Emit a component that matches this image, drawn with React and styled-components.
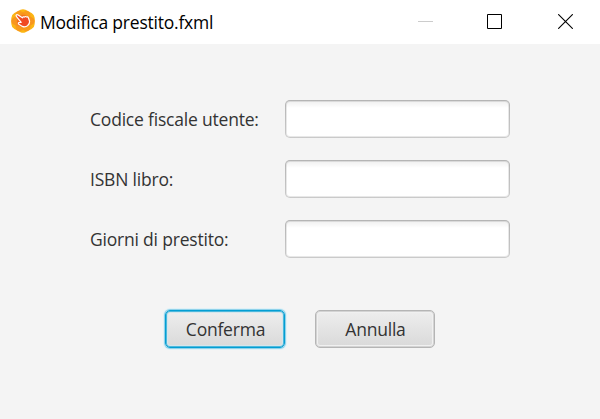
import React from "react";
import styled, { createGlobalStyle, css } from "styled-components";

const GlobalStyle = createGlobalStyle`
  * { box-sizing: border-box; }
  body { margin: 0; background: #f4f4f4; }
`;

const Window = styled.div`
  display: flex;
  flex-direction: column;
  width: 600px;
  height: 419px;
  overflow: hidden;
  background: #f4f4f4;
  font-family: "Open Sans", "Noto Sans", sans-serif;
  font-size: 17.5px;
  color: #333;
`;

const TitleBar = styled.header`
  display: flex;
  align-items: center;
  height: 44px;
  padding: 0 0 2px 11px;
  background: #fff;
`;

const Title = styled.h1`
  flex: 1;
  margin: 0 0 0 5px;
  padding-top: 2px;
  font-size: 17.5px;
  font-weight: 400;
  line-height: 24px;
  color: #000;
  letter-spacing: -0.22px;
`;

const WindowControls = styled.div`
  display: flex;
`;

const ControlButton = styled.button`
  display: flex;
  align-items: center;
  justify-content: center;
  width: ${(p) => p.$width}px;
  height: 42px;
  padding: 0;
  border: 0;
  background: none;
`;

const Form = styled.form`
  display: flex;
  flex-direction: column;
  padding: 56px 90px 0;
`;

const Fields = styled.div`
  display: grid;
  row-gap: 22px;
`;

const Field = styled.label`
  display: grid;
  grid-template-columns: 195px 225px;
  align-items: center;
  height: 38px;
`;

const FieldLabel = styled.span`
  line-height: 24px;
  white-space: nowrap;
  letter-spacing: -0.2px;
`;

const TextInput = styled.input`
  width: 225px;
  height: 38px;
  padding: 0 10px;
  border: 1px solid transparent;
  border-radius: 5px;
  outline: 0;
  font: inherit;
  color: inherit;
  background:
    linear-gradient(#efefef, #fff 7px) padding-box,
    linear-gradient(#b4b4b4, #cacaca) border-box;
  box-shadow: inset 0 0 0 1px rgb(0 0 0 / 9%);
`;

const Actions = styled.div`
  display: flex;
  gap: 30px;
  padding: 52px 0 0 75px;
`;

const Button = styled.button`
  width: 120px;
  height: 38px;
  padding: 0 0 1px 1px;
  border: 1px solid #b5b5b5;
  border-radius: 5px;
  font: inherit;
  color: #333;
  letter-spacing: -0.22px;
  background: linear-gradient(#eeeeee, #d9d9d9);
  box-shadow: inset 0 0 0 1px #d3d3d3, inset 0 0 0 2px #f0f0f0;
  ${(p) => p.$focused && css`
    border-color: #039ed3;
    box-shadow: 0 0 0 1px #8fd2ea, 0 0 0 2px #e0f1f7, inset 0 0 0 1px #4db8dc, inset 0 0 0 2px #d4e6ec;
  `}
`;

const AppIcon = () => (
  <svg width="24" height="24" viewBox="0 0 24 24" aria-hidden="true">
    <path d="M9.5.8Q12-.4 14.5.8L20.6 4Q23.5 5.7 23.7 9v6Q23.5 18.3 20.6 20l-6.1 3.2Q12 24.4 9.5 23.2L3.4 20Q.5 18.3.3 15V9Q.5 5.7 3.4 4Z" fill="#fcb514" />
    <ellipse cx="12" cy="12" rx="11.7" ry="5.8" fill="#f8961d" />
    <ellipse cx="12" cy="12" rx="11.3" ry="5.6" transform="rotate(60 12 12)" fill="#f68b1f" fillOpacity=".6" />
    <ellipse cx="12" cy="12" rx="11.3" ry="5.6" transform="rotate(120 12 12)" fill="#f68b1f" fillOpacity=".6" />
    <circle cx="12" cy="12" r="6" fill="#f4701f" />
    <path d="M5.2 6.1Q5.9 5.2 7.1 5.9L11.4 8.8Q12.2 7.2 13.4 8.1 14.4 7 15.5 8 16.8 7.3 17.5 9L18.6 12.3Q18.8 15 16.7 16.6 14.2 18.6 11.4 17.4L7.9 15.3Q6.8 14.2 8 13.5L10.2 13.4 5.5 7.6Q4.8 6.8 5.2 6.1Z" fill="#f04a23" stroke="#fff" strokeWidth="1.2" strokeLinejoin="round" />
  </svg>
);

const MinimizeIcon = () => (
  <svg width="15" height="15" aria-hidden="true">
    <path d="M0 7.5h15" stroke="#ccc" />
  </svg>
);

const MaximizeIcon = () => (
  <svg width="15" height="15" aria-hidden="true">
    <path d="M.5.5h14v14H.5z" fill="none" stroke="#000" />
  </svg>
);

const CloseIcon = () => (
  <svg width="15" height="15" aria-hidden="true">
    <path d="m.2.2 14.6 14.6m0-14.6L.2 14.8" stroke="#000" strokeWidth="1.1" />
  </svg>
);

const CloseButton = styled(ControlButton)`
  padding-left: 2px;
`;

const fields = [
  { name: "codice", label: "Codice fiscale utente:" },
  { name: "isbn", label: "ISBN libro:" },
  { name: "giorni", label: "Giorni di prestito:" },
];

export default function App() {
  return (
    <>
      <GlobalStyle />
      <Window>
        <TitleBar>
          <AppIcon />
          <Title>Modifica prestito.fxml</Title>
          <WindowControls>
            <ControlButton $width={69} aria-label="Riduci a icona" disabled><MinimizeIcon /></ControlButton>
            <ControlButton $width={69} aria-label="Ingrandisci"><MaximizeIcon /></ControlButton>
            <CloseButton $width={71} aria-label="Chiudi"><CloseIcon /></CloseButton>
          </WindowControls>
        </TitleBar>
        <Form onSubmit={(e) => e.preventDefault()}>
          <Fields>
            {fields.map((f) => (
              <Field key={f.name}>
                <FieldLabel>{f.label}</FieldLabel>
                <TextInput name={f.name} />
              </Field>
            ))}
          </Fields>
          <Actions>
            <Button type="submit" $focused>Conferma</Button>
            <Button type="button">Annulla</Button>
          </Actions>
        </Form>
      </Window>
    </>
  );
}
